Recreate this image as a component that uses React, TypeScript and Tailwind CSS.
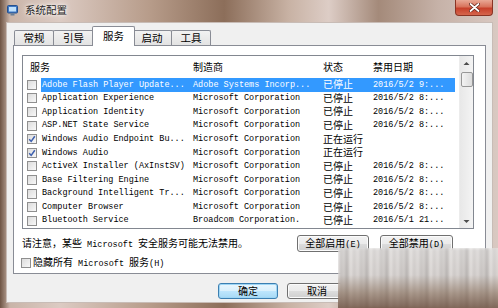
import React from "react";
import clsx from "clsx";

type Row = {
  name: string;
  maker: string;
  status: string;
  date: string;
  checked?: boolean;
  selected?: boolean;
};

const ROWS: Row[] = [
  { name: "Adobe Flash Player Update...", maker: "Adobe Systems Incorp...", status: "已停止", date: "2016/5/2 9:...", selected: true },
  { name: "Application Experience", maker: "Microsoft Corporation", status: "已停止", date: "2016/5/2 8:..." },
  { name: "Application Identity", maker: "Microsoft Corporation", status: "已停止", date: "2016/5/2 8:..." },
  { name: "ASP.NET State Service", maker: "Microsoft Corporation", status: "已停止", date: "2016/5/2 8:..." },
  { name: "Windows Audio Endpoint Bu...", maker: "Microsoft Corporation", status: "正在运行", date: "", checked: true },
  { name: "Windows Audio", maker: "Microsoft Corporation", status: "正在运行", date: "", checked: true },
  { name: "ActiveX Installer (AxInstSV)", maker: "Microsoft Corporation", status: "已停止", date: "2016/5/2 8:..." },
  { name: "Base Filtering Engine", maker: "Microsoft Corporation", status: "已停止", date: "2016/5/2 8:..." },
  { name: "Background Intelligent Tr...", maker: "Microsoft Corporation", status: "已停止", date: "2016/5/2 8:..." },
  { name: "Computer Browser", maker: "Microsoft Corporation", status: "已停止", date: "2016/5/2 8:..." },
  { name: "Bluetooth Service", maker: "Broadcom Corporation.", status: "已停止", date: "2016/5/1 21..." },
];

const TABS = [
  { label: "常规", w: "w-[40px]" },
  { label: "引导", w: "w-[41px]" },
  { label: "服务", w: "w-[43px]", active: true },
  { label: "启动", w: "w-[40px]" },
  { label: "工具", w: "w-[40px]" },
];

const MONO = "font-['Liberation_Mono',monospace] text-[8.5px] leading-none";
const CJK = "font-['Noto_Sans_CJK_SC',sans-serif] text-[10px] leading-none";

function Check({ checked }: { checked?: boolean }) {
  return (
    <span className="flex h-[10px] w-[10px] items-center justify-center border border-[#8f8f8f] bg-[linear-gradient(135deg,#dcdcdc,#f8f8f8)]">
      {checked && (
        <svg width="8" height="8" viewBox="0 0 8 8">
          <path d="M1.2 4.2 L3.2 6.4 L6.8 1.2" fill="none" stroke="#3c5fae" strokeWidth="1.5" />
        </svg>
      )}
    </span>
  );
}

function Button({ children, primary }: { children: React.ReactNode; primary?: boolean }) {
  return (
    <div
      className={clsx(
        "flex h-full items-center justify-center rounded-[3px] border",
        primary
          ? "border-[#3c7fb1] bg-[linear-gradient(#eaf6fd_0%,#d9f0fc_50%,#bee6fd_51%,#a7d9f5_100%)] shadow-[inset_0_0_0_1px_#9fd6f5]"
          : "border-[#707070] bg-[linear-gradient(#f2f2f2_0%,#ebebeb_50%,#dddddd_51%,#cfcfcf_100%)] shadow-[inset_0_0_0_1px_#fbfbfb]"
      )}
    >
      {children}
    </div>
  );
}

function ServiceRow({ row }: { row: Row }) {
  return (
    <div className="flex h-[13.6px] items-center">
      <div className="flex w-[18px] pl-[4px]">
        <Check checked={row.checked} />
      </div>
      <div
        className={clsx(
          "grid h-full grid-cols-[152px_130px_50px_82px] items-center",
          row.selected ? "bg-[#3399ff] text-white" : "text-black"
        )}
      >
        <span className={clsx(MONO, "pl-[1px] whitespace-pre")}>{row.name}</span>
        <span className={clsx(MONO, "whitespace-pre")}>{row.maker}</span>
        <span className={clsx(CJK, "-mt-[1px]")}>{row.status}</span>
        <span className={clsx(MONO, "whitespace-pre")}>{row.date}</span>
      </div>
    </div>
  );
}

function ScrollBar() {
  return (
    <div className="flex w-[14px] flex-col items-center border-l border-[#ececec] bg-[linear-gradient(90deg,#e8e8e8,#f4f4f4)]">
      <svg width="7" height="5" viewBox="0 0 7 5" className="mt-[5px]">
        <path d="M0.5 4 L3.5 1 L6.5 4 Z" fill="#4d4d4d" />
      </svg>
      <div className="mt-[6px] h-[15px] w-[12px] rounded-[2px] border border-[#979797] bg-[linear-gradient(90deg,#f3f3f3,#dcdcdc)]" />
      <div className="flex-1" />
      <svg width="7" height="5" viewBox="0 0 7 5" className="mb-[4px]">
        <path d="M0.5 1 L3.5 4 L6.5 1 Z" fill="#4d4d4d" />
      </svg>
    </div>
  );
}

export default function App() {
  return (
    <div className="relative flex h-[308px] w-[498px] flex-col overflow-hidden bg-[linear-gradient(90deg,#6e5444_0%,#c9b4a8_2%,#dccbc3_12%,#b79c8a_30%,#8c6e5a_45%,#c8b2a4_58%,#ddcdc6_66%,#a48a7a_76%,#c6b2a8_88%,#d9c9c2_100%)] font-['Noto_Sans_CJK_SC',sans-serif]">
      {/* title bar */}
      <div className="flex h-[22px] items-start">
        <svg width="11" height="11" viewBox="0 0 11 11" className="ml-[7px] mt-[5px]">
          <rect x="0.5" y="0.5" width="10" height="7.5" rx="1" fill="#3f78c4" stroke="#24508e" />
          <rect x="2" y="2" width="7" height="4.5" fill="#bfe0fb" />
          <rect x="3.5" y="8.5" width="4" height="2" fill="#6a7f96" />
        </svg>
        <span className="ml-[7px] mt-[5px] text-[10.5px] leading-none text-[#1d1d1d] [text-shadow:0_0_6px_#fff,0_0_3px_#fff]">
          系统配置
        </span>
        <div className="ml-auto mr-[5px] flex h-[16px] w-[38px] items-center justify-center rounded-b-[4px] border border-t-0 border-[#8a3424] bg-[linear-gradient(#e9a895_0%,#d8735c_45%,#c7402a_55%,#d5664d_100%)]">
          <svg width="11" height="9" viewBox="0 0 11 9">
            <path d="M1.5 1 L9.5 8 M9.5 1 L1.5 8" stroke="#5a1c12" strokeWidth="3.2" strokeLinecap="round" />
            <path d="M1.5 1 L9.5 8 M9.5 1 L1.5 8" stroke="#ffffff" strokeWidth="1.8" strokeLinecap="round" />
          </svg>
        </div>
      </div>

      {/* client area */}
      <div className="ml-[6px] flex h-[281px] w-[487px] flex-col border border-[#c8bcb6] bg-[#f0f0f0]">
        <div className="ml-[7px] flex h-[22px] items-end">
          {TABS.map((t) => (
            <div
              key={t.label}
              className={clsx(
                "flex items-center justify-center border border-[#898c95] text-[10.5px] leading-none text-black",
                t.w,
                t.active
                  ? "relative z-10 -mx-[2px] -mb-[1px] h-[20px] rounded-t-[2px] border-b-0 bg-white pb-[1px]"
                  : "-ml-[1px] h-[15px] rounded-t-[2px] border-b-0 bg-[linear-gradient(#f2f2f2,#e3e3e3)] first:ml-0"
              )}
            >
              {t.label}
            </div>
          ))}
        </div>

        <div className="ml-[6px] flex h-[229px] w-[473px] flex-col border border-[#898c95] bg-white pl-[8px] pt-[9px]">
          {/* list view */}
          <div className="flex h-[174px] w-[452px] overflow-hidden border border-[#828790] bg-white">
            <div className="flex flex-1 flex-col">
              <div className="grid h-[22px] shrink-0 grid-cols-[170px_130px_50px_82px] items-center">
                <span className={clsx(CJK, "pl-[7px]")}>服务</span>
                <span className={CJK}>制造商</span>
                <span className={CJK}>状态</span>
                <span className={CJK}>禁用日期</span>
              </div>
              {ROWS.map((r) => (
                <ServiceRow key={r.name} row={r} />
              ))}
            </div>
            <ScrollBar />
          </div>

          <div className="mt-[6px] flex h-[17px] w-[452px] items-center">
            <span className="flex items-baseline">
              <span className={CJK}>请注意，某些</span>
              <span className={clsx(MONO, "whitespace-pre")}> Microsoft </span>
              <span className={CJK}>安全服务可能无法禁用。</span>
            </span>
            <div className="ml-auto mr-[21px] flex gap-[11px]">
              <div className="h-[17px] w-[72px]">
                <Button>
                  <span className="flex items-baseline">
                    <span className={CJK}>全部启用</span>
                    <span className={clsx(MONO, "whitespace-pre")}>(E)</span>
                  </span>
                </Button>
              </div>
              <div className="h-[17px] w-[73px]">
                <Button>
                  <span className="flex items-baseline">
                    <span className={CJK}>全部禁用</span>
                    <span className={clsx(MONO, "whitespace-pre")}>(D)</span>
                  </span>
                </Button>
              </div>
            </div>
          </div>

          <div className="-ml-[1px] mt-[4px] flex h-[13px] items-center">
            <Check />
            <span className="ml-[2px] flex items-baseline">
              <span className={CJK}>隐藏所有</span>
              <span className={clsx(MONO, "whitespace-pre")}> Microsoft </span>
              <span className={CJK}>服务</span>
              <span className={clsx(MONO, "whitespace-pre")}>(H)</span>
            </span>
          </div>
        </div>

        <div className="mr-[7px] mt-[9px] flex justify-end gap-[9px]">
          {[
            { label: "确定", primary: true },
            { label: "取消" },
            { label: "应用(A)" },
            { label: "帮助" },
          ].map((b) => (
            <div key={b.label} className="h-[16px] w-[60px]">
              <Button primary={b.primary}>
                <span className={CJK}>{b.label}</span>
              </Button>
            </div>
          ))}
        </div>
      </div>

      {/* blurred watermark over the lower right corner */}
      <div className="absolute left-[338px] top-[248px] h-[60px] w-[160px] overflow-hidden">
        <div className="h-full w-full bg-[repeating-linear-gradient(90deg,#e2dedc_0px,#a9a5a3_3px,#d7d3d1_6px,#8d8987_9px,#ebe7e5_12px,#b8b4b2_16px,#dcd8d6_20px)] blur-[1.5px]" />
        <div className="absolute inset-0 bg-[linear-gradient(#ffffff55_0%,#f4efec33_45%,#8d735f99_75%,#6d5040cc_100%)]" />
      </div>
    </div>
  );
}
